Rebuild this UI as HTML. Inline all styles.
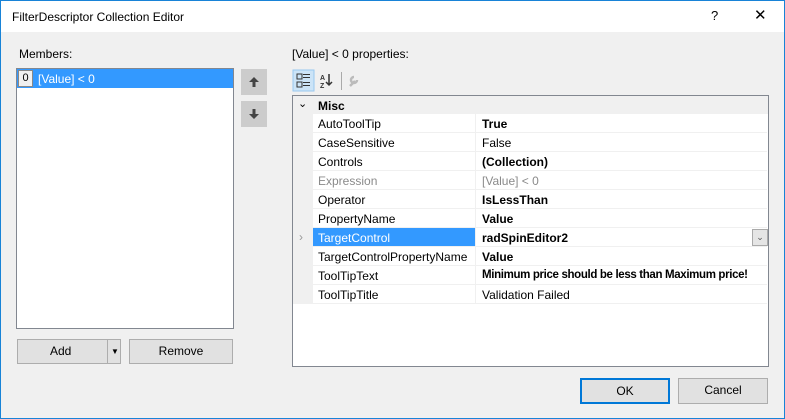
<!DOCTYPE html><html><head><style>
*{box-sizing:border-box;margin:0;padding:0}
body{width:785px;height:419px;overflow:hidden;font-family:"Liberation Sans",sans-serif;font-size:12px;color:#000;background:#f0f0f0;position:relative}
.win{position:absolute;left:0;top:0;width:785px;height:419px;border:1px solid #1883d7}
.title{position:absolute;left:1px;top:1px;width:783px;height:31px;background:#fff}
.a{position:absolute;white-space:nowrap}
.btn{position:absolute;background:#e1e1e1;border:1px solid #adadad;text-align:center;line-height:23px}
.row{position:absolute;left:313px;width:454px;height:19px;border-bottom:1px solid #f0f0f0;background:#fff;white-space:nowrap}
.row span{position:absolute;top:3px}
.n{left:5px}.v{left:169px}
.sep{position:absolute;left:475px;top:114px;width:1px;height:190px;background:#f0f0f0}
</style></head><body>
<div class="win"></div>
<div class="title"><span class="a" style="left:11px;top:9px;font-size:12px">FilterDescriptor Collection Editor</span>
<span class="a" style="left:710px;top:7px;font-size:13px">?</span>
<span class="a" style="left:753px;top:5px;font-size:15px">✕</span></div>
<span class="a" style="left:19px;top:47px">Members:</span>
<div class="a" style="left:16px;top:68px;width:218px;height:261px;background:#fff;border:1px solid #828790"></div>
<div class="a" style="left:17px;top:69px;width:216px;height:19px;background:#3399ff"></div>
<div class="a" style="left:18px;top:70px;width:15px;height:17px;background:#f0f0f0;border:1px solid #888;font-size:11px;text-align:center;line-height:15px">0</div>
<span class="a" style="left:38px;top:72px;color:#fff">[Value] &lt; 0</span>
<svg class="a" style="left:241px;top:69px" width="26" height="58"><rect width="26" height="26" fill="#ccc"/><rect y="32" width="26" height="26" fill="#ccc"/><path d="M13 8l-5 5h3.5v5h3v-5H18z" fill="#444"/><path d="M13 50l-5-5h3.5v-5h3v5H18z" fill="#444"/></svg>
<div class="btn" style="left:17px;top:339px;width:104px;height:25px;text-align:left;padding-left:32px">Add<span class="a" style="left:89px;top:0;width:1px;height:23px;background:#adadad"></span><span class="a" style="left:93px;top:0;font-size:8px">▼</span></div>
<div class="btn" style="left:129px;top:339px;width:104px;height:25px">Remove</div>
<span class="a" style="left:292px;top:47px">[Value] &lt; 0 properties:</span>
<svg class="a" style="left:292px;top:69px" width="80" height="24"><rect x="1" y="1" width="21" height="21" fill="#cce4f7" stroke="#99c9ef"/><g fill="#333"><rect x="5" y="5" width="5" height="5" fill="none" stroke="#333"/><rect x="5" y="13" width="5" height="5" fill="none" stroke="#333"/><rect x="11" y="5" width="7" height="1"/><rect x="11" y="8" width="7" height="1"/><rect x="11" y="13" width="7" height="1"/><rect x="11" y="16" width="7" height="1"/></g><text x="28" y="11" font-size="7" font-weight="bold" fill="#333">A</text><text x="28" y="19" font-size="7" font-weight="bold" fill="#333">Z</text><path d="M37 5v11M34 13l3 3 3-3" stroke="#333" fill="none" stroke-width="1.5"/><rect x="49" y="3" width="1" height="18" fill="#aaa"/><path d="M58 17l5-5M62 8a3 3 0 1 0 3 3" stroke="#bbb" stroke-width="2.5" fill="none"/></svg>
<div class="a" style="left:292px;top:95px;width:477px;height:272px;background:#fff;border:1px solid #828790"></div>
<div class="a" style="left:293px;top:96px;width:20px;height:208px;background:#f0f0f0"></div>
<div class="a" style="left:293px;top:96px;width:475px;height:18px;background:#f0f0f0"></div>
<span class="a" style="left:298px;top:97px;font-size:11px">⌄</span>
<span class="a" style="left:318px;top:99px;font-weight:bold">Misc</span>
<div class="row" style="top:114px"><span class="n">AutoToolTip</span><span class="v"><b>True</b></span></div>
<div class="row" style="top:133px"><span class="n">CaseSensitive</span><span class="v">False</span></div>
<div class="row" style="top:152px"><span class="n">Controls</span><span class="v"><b>(Collection)</b></span></div>
<div class="row" style="top:171px;color:#8a8a8a"><span class="n">Expression</span><span class="v">[Value] &lt; 0</span></div>
<div class="row" style="top:190px"><span class="n">Operator</span><span class="v"><b>IsLessThan</b></span></div>
<div class="row" style="top:209px"><span class="n">PropertyName</span><span class="v"><b>Value</b></span></div>
<div class="row" style="top:228px"><div class="a" style="left:0;top:0;width:162px;height:18px;background:#3399ff"></div><span class="n" style="color:#fff">TargetControl</span><span class="v"><b>radSpinEditor2</b></span><div class="a" style="left:439px;top:1px;width:16px;height:17px;background:#e5e5e5;border:1px solid #aaa;font-size:9px;text-align:center;line-height:14px;color:#555">⌄</div></div>
<span class="a" style="left:299px;top:230px;color:#999">›</span>
<div class="row" style="top:247px"><span class="n">TargetControlPropertyName</span><span class="v"><b>Value</b></span></div>
<div class="row" style="top:266px"><span class="n">ToolTipText</span><span class="v" style="font-size:11.5px;letter-spacing:-0.35px"><b>Minimum price should be less than Maximum price!</b></span></div>
<div class="row" style="top:285px"><span class="n">ToolTipTitle</span><span class="v">Validation Failed</span></div>
<div class="sep"></div>
<div class="btn" style="left:580px;top:378px;width:90px;height:26px;border:2px solid #0078d7;line-height:22px">OK</div>
<div class="btn" style="left:678px;top:378px;width:90px;height:26px">Cancel</div>
</body></html>
